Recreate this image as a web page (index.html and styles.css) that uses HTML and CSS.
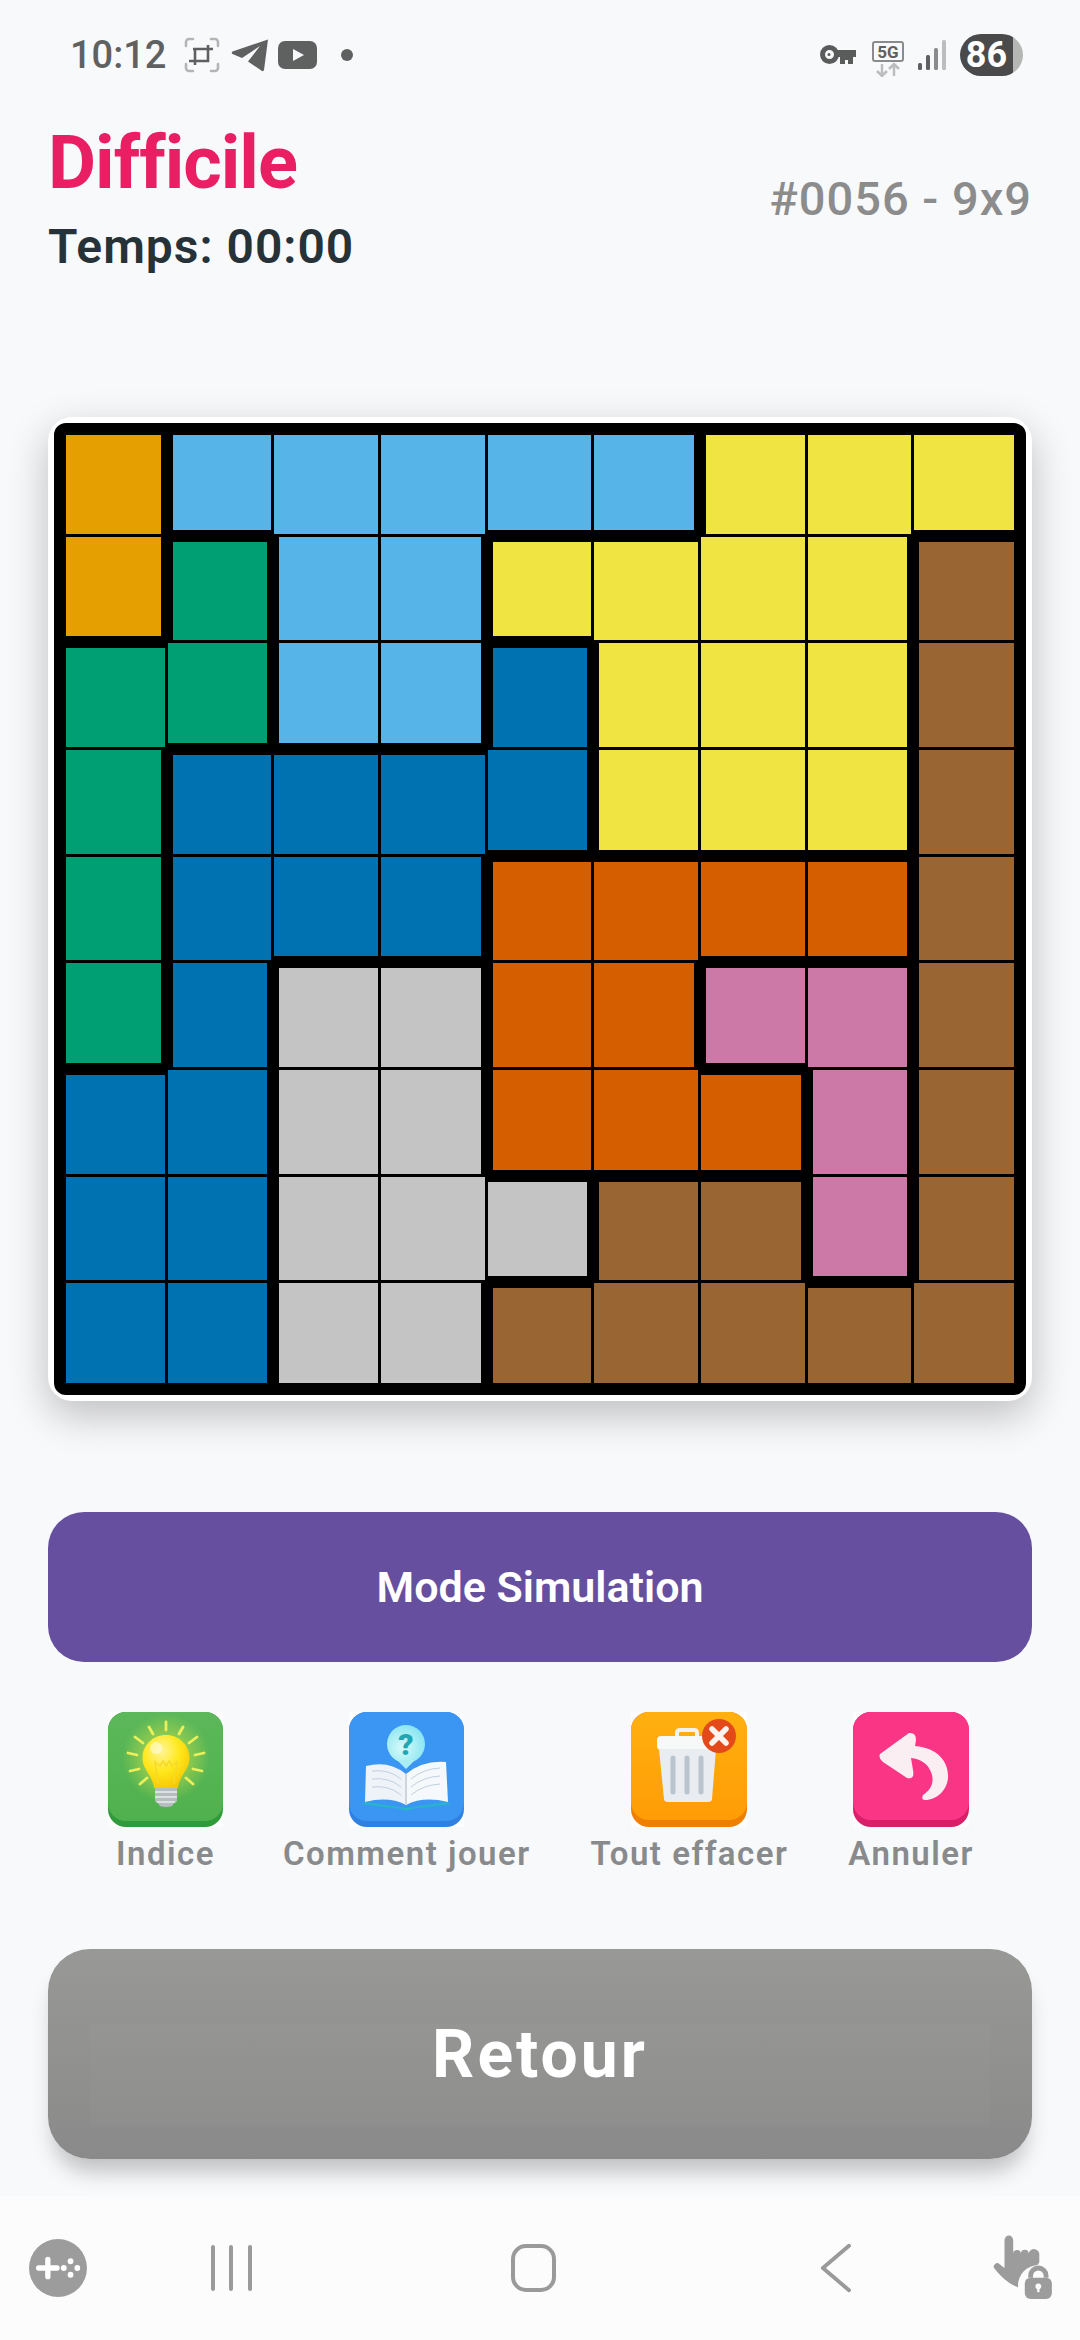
FILE: index.html
```html
<!DOCTYPE html>
<html lang="fr">
<head>
    <meta charset="UTF-8">
    <meta name="viewport" content="width=device-width, initial-scale=1.0">
    <title>Difficile</title>
    <link rel="stylesheet" href="styles.css">
</head>
<body>
    <!-- Barre d'état -->
    <div class="status-bar">
        <div class="status-left">
            <span class="clock">10:12</span>
            <svg class="ic-crop" width="36" height="36" viewBox="0 0 36 36" fill="none">
                <path d="M2 9V5a3 3 0 0 1 3-3h4M27 2h4a3 3 0 0 1 3 3v4M34 27v4a3 3 0 0 1-3 3h-4M9 34H5a3 3 0 0 1-3-3v-4" stroke="#b4b6b6" stroke-width="2.6" stroke-linecap="round"/>
                <path d="M11 28v-4M24 8v4M9 12h20M24 12v12H5M11 12v12" stroke="#5f6161" stroke-width="2.6"/>
            </svg>
            <svg class="ic-telegram" width="38" height="34" viewBox="0 0 38 34"><path d="M37 1.5 L33 32 Q32.500 33.500 31 33 L17 23.500 L29 8 L11 20 L1.500 16 Q0 14.500 1.500 13.500 Z" fill="#5f6161"/></svg>
            <svg class="ic-youtube" width="39" height="28" viewBox="0 0 39 28"><rect width="39" height="28" rx="7" fill="#5f6161"/><path d="M15 8 L26 14 L15 20 Z" fill="#f8f9fb"/></svg>
            <span class="status-dot"></span>
        </div>
        <div class="status-right">
            <svg class="ic-key" width="36" height="20" viewBox="0 0 36 20"><circle cx="9.500" cy="9.500" r="7" fill="none" stroke="#5a5c5c" stroke-width="5"/><circle cx="9" cy="9.500" r="1.500" fill="#5a5c5c"/><path d="M16 5h20v7h-3v7h-5v-4h-3v4h-5v-7h-4z" fill="#5a5c5c"/></svg>
            <svg class="ic-5g" width="32" height="36" viewBox="0 0 32 36">
                <rect x="1" y="1" width="30" height="19" rx="2" fill="none" stroke="#8a8c8c" stroke-width="2"/>
                <text x="16" y="16.500" text-anchor="middle" class="five-g">5G</text>
                <path d="M10 23v12M5 30l5 5 5-5M22 35V23M17 28l5-5 5 5" fill="none" stroke="#bcbebe" stroke-width="2.500"/>
            </svg>
            <svg class="ic-signal" width="28" height="30" viewBox="0 0 28 30">
                <rect x="0" y="23" width="4" height="7" rx="1.500" fill="#5f6161"/>
                <rect x="8" y="15" width="4" height="15" rx="1.500" fill="#5f6161"/>
                <rect x="16" y="8" width="4" height="22" rx="1.500" fill="#8a8c8c"/>
                <rect x="24" y="0" width="4" height="30" rx="1.500" fill="#bcbebe"/>
            </svg>
            <span class="battery"><span class="battery-level">86</span></span>
        </div>
    </div>

    <div class="page">
        <!-- En-tête -->
        <div class="top-row">
            <div>
                <h1 class="level">Difficile</h1>
                <p class="timer">Temps: 00:00</p>
            </div>
            <p class="puzzle-id">#0056 - 9x9</p>
        </div>

        <!-- Grille -->
        <div class="board-card">
            <div class="board">
                <div class="cell amber bt bl br"></div>
                <div class="cell sky bt bl bb"></div>
                <div class="cell sky bt"></div>
                <div class="cell sky bt"></div>
                <div class="cell sky bt bb"></div>
                <div class="cell sky bt bb br"></div>
                <div class="cell yellow bt bl"></div>
                <div class="cell yellow bt"></div>
                <div class="cell yellow bt br bb"></div>

                <div class="cell amber bl br bb"></div>
                <div class="cell green bt bl br"></div>
                <div class="cell sky bl"></div>
                <div class="cell sky br"></div>
                <div class="cell yellow bt bl bb"></div>
                <div class="cell yellow bt"></div>
                <div class="cell yellow"></div>
                <div class="cell yellow br"></div>
                <div class="cell brown bt bl br"></div>

                <div class="cell green bt bl"></div>
                <div class="cell green br bb"></div>
                <div class="cell sky bl bb"></div>
                <div class="cell sky br bb"></div>
                <div class="cell blue bt bl br"></div>
                <div class="cell yellow bl"></div>
                <div class="cell yellow"></div>
                <div class="cell yellow br"></div>
                <div class="cell brown bl br"></div>

                <div class="cell green bl br"></div>
                <div class="cell blue bt bl"></div>
                <div class="cell blue bt"></div>
                <div class="cell blue bt"></div>
                <div class="cell blue br bb"></div>
                <div class="cell yellow bl bb"></div>
                <div class="cell yellow bb"></div>
                <div class="cell yellow br bb"></div>
                <div class="cell brown bl br"></div>

                <div class="cell green bl br"></div>
                <div class="cell blue bl"></div>
                <div class="cell blue bb"></div>
                <div class="cell blue br bb"></div>
                <div class="cell orange bt bl"></div>
                <div class="cell orange bt"></div>
                <div class="cell orange bt bb"></div>
                <div class="cell orange bt br bb"></div>
                <div class="cell brown bl br"></div>

                <div class="cell green bl br bb"></div>
                <div class="cell blue bl br"></div>
                <div class="cell gray bt bl"></div>
                <div class="cell gray bt br"></div>
                <div class="cell orange bl"></div>
                <div class="cell orange br"></div>
                <div class="cell pink bt bl bb"></div>
                <div class="cell pink bt br"></div>
                <div class="cell brown bl br"></div>

                <div class="cell blue bt bl"></div>
                <div class="cell blue br"></div>
                <div class="cell gray bl"></div>
                <div class="cell gray br"></div>
                <div class="cell orange bl bb"></div>
                <div class="cell orange bb"></div>
                <div class="cell orange bt br bb"></div>
                <div class="cell pink bl br"></div>
                <div class="cell brown bl br"></div>

                <div class="cell blue bl"></div>
                <div class="cell blue br"></div>
                <div class="cell gray bl"></div>
                <div class="cell gray"></div>
                <div class="cell gray bt br bb"></div>
                <div class="cell brown bt bl"></div>
                <div class="cell brown bt br"></div>
                <div class="cell pink bl br bb"></div>
                <div class="cell brown bl br"></div>

                <div class="cell blue bl bb"></div>
                <div class="cell blue br bb"></div>
                <div class="cell gray bl bb"></div>
                <div class="cell gray br bb"></div>
                <div class="cell brown bt bl bb"></div>
                <div class="cell brown bb"></div>
                <div class="cell brown bb"></div>
                <div class="cell brown bt bb"></div>
                <div class="cell brown br bb"></div>
            </div>
        </div>

        <button class="btn-mode">Mode Simulation</button>

        <!-- Actions -->
        <div class="actions">
            <div class="action">
                <svg class="action-icon" width="115" height="115" viewBox="0 0 115 115">
                    <defs>
                        <linearGradient id="bulbBg" x1="0" y1="0" x2="0" y2="1"><stop offset="0" stop-color="#5cb85a"/><stop offset="1" stop-color="#4fb14d"/></linearGradient>
                        <radialGradient id="bulbGlass" cx="0.4" cy="0.3" r="0.75"><stop offset="0" stop-color="#fff59a"/><stop offset="0.5" stop-color="#ffe81f"/><stop offset="1" stop-color="#f7c600"/></radialGradient>
                        <radialGradient id="bulbGlow"><stop offset="0.5" stop-color="#c8e04a" stop-opacity="0.5"/><stop offset="1" stop-color="#c8e04a" stop-opacity="0"/></radialGradient>
                    </defs>
                    <rect width="115" height="115" rx="18" fill="#2e9a3a"/>
                    <rect width="115" height="109" rx="18" fill="url(#bulbBg)"/>
                    <circle cx="58" cy="46" r="44" fill="url(#bulbGlow)"/>
                    <path d="M58 10v8M41 15l4 7M75 15l-4 7M27 25l8 6M89 25l-8 6M20 41l9 2M96 41l-9 2M22 59l9-2M94 59l-9-2M32 72l7-6M85 72l-7-6" stroke="#ecef5a" stroke-width="2.800" stroke-linecap="round"/>
                    <path d="M58 23c-13 0-23.500 10-23.500 23 0 12 10 17 11.500 30h24c1.500-13 11.500-18 11.500-30 0-13-10.500-23-23.500-23z" fill="url(#bulbGlass)"/>
                    <path d="M50 72l-3-22 5 4 3-5 3 5 3-5 3 5 5-4-3 22" fill="none" stroke="#f5d92a" stroke-width="1.500"/>
                    <ellipse cx="48" cy="36" rx="6" ry="6" fill="#fff" opacity="0.45"/>
                    <path d="M47 76h22v12q0 3-3 3l-2 3q-6 2-12 0l-2-3q-3 0-3-3z" fill="#b7bdbf"/>
                    <path d="M47 80h22M47 85h22M49 90h18" stroke="#e7ecec" stroke-width="1.600"/>
                </svg>
                <span class="action-label">Indice</span>
            </div>
            <div class="action">
                <svg class="action-icon" width="115" height="115" viewBox="0 0 115 115">
                    <defs>
                        <radialGradient id="bubble" cx="0.4" cy="0.6" r="0.7"><stop offset="0" stop-color="#d8fafc"/><stop offset="1" stop-color="#7fe3ef"/></radialGradient>
                    </defs>
                    <rect width="115" height="115" rx="18" fill="#2f80e0"/>
                    <rect width="115" height="109" rx="18" fill="#3b96f3"/>
                    <circle cx="57" cy="32" r="19" fill="url(#bubble)"/>
                    <path d="M48 48h18l-9 9z" fill="#a9eef5"/>
                    <text x="57" y="43" text-anchor="middle" class="book-mark">?</text>
                    <path d="M12 92 L17 90 L57 96 L97 90 L103 92 L62 97 Q57 100 52 97 Z" fill="#27b5c9"/>
                    <path d="M17 54 Q40 48 57 62 L57 93 Q40 84 16 90 Z" fill="#eef3f7"/>
                    <path d="M97 50 Q74 48 57 62 L57 93 Q74 84 99 90 Z" fill="#f6f9fb"/>
                    <path d="M23 59Q40 57 52 67M23 67Q40 65 52 75M23 75Q40 73 52 83M91 56Q74 57 62 67M91 64Q74 65 62 75M91 72Q74 73 62 83" fill="none" stroke="#c0cfe0" stroke-width="1"/>
                    <path d="M57 62v31" stroke="#cdd6df" stroke-width="2"/>
                </svg>
                <span class="action-label">Comment jouer</span>
            </div>
            <div class="action">
                <svg class="action-icon" width="116" height="115" viewBox="0 0 116 115">
                    <defs>
                        <linearGradient id="trashBg" x1="0" y1="0" x2="0" y2="1"><stop offset="0" stop-color="#ffb010"/><stop offset="1" stop-color="#ff9c06"/></linearGradient>
                    </defs>
                    <rect width="116" height="115" rx="18" fill="#f07f00"/>
                    <rect width="116" height="108" rx="18" fill="url(#trashBg)"/>
                    <path d="M46 25v-4q0-3 3-3h14q3 0 3 3v4" fill="none" stroke="#f2f2ee" stroke-width="4"/>
                    <rect x="26" y="24" width="60" height="14" rx="4" fill="#f7f8f8"/>
                    <path d="M28 37h57l-4 50q0 3-4 3H37q-4 0-4-3z" fill="#e9edf2"/>
                    <path d="M42 46v34M56 46v34M70 46v34" stroke="#b9c4ce" stroke-width="5" stroke-linecap="round"/>
                    <circle cx="88" cy="24" r="17" fill="#e4491a"/>
                    <path d="M81 17l14 14M95 17l-14 14" stroke="#fdf3ee" stroke-width="5.500" stroke-linecap="round"/>
                </svg>
                <span class="action-label">Tout effacer</span>
            </div>
            <div class="action">
                <svg class="action-icon" width="116" height="115" viewBox="0 0 116 115">
                    <rect width="116" height="115" rx="18" fill="#d81f68"/>
                    <rect width="116" height="108" rx="18" fill="#fb3585"/>
                    <path d="M27 42 L56 21 Q63 20 63 28 L62 34 C85 36 96 50 95 66 C94 78 84 88 72 88 Q68 88 70 83 C78 78 82 70 78 60 C75 52 68 47 58 46 L60 58 Q62 68 54 66 L30 50 Q25 46 27 42 Z" fill="#fbeef3"/>
                </svg>
                <span class="action-label">Annuler</span>
            </div>
        </div>

        <button class="btn-back">Retour</button>
    </div>

    <!-- Barre de navigation -->
    <div class="nav-bar">
        <svg class="nav-game" width="60" height="60" viewBox="0 0 60 60">
            <circle cx="30" cy="30" r="30" fill="#9c9c9c"/>
            <path d="M10 30h19M19.500 21v18" stroke="#fff" stroke-width="5.500" stroke-linecap="round"/>
            <circle cx="36" cy="30" r="3" fill="#fff"/><circle cx="43" cy="23" r="3" fill="#fff"/>
            <circle cx="50" cy="30" r="3" fill="#fff"/><circle cx="43" cy="37" r="3" fill="#fff"/>
        </svg>
        <span class="nav-recents"><i></i><i></i><i></i></span>
        <span class="nav-home"></span>
        <svg class="nav-back" width="32" height="50" viewBox="0 0 32 50"><path d="M30 2 L3 25 L30 48" fill="none" stroke="#9a9a9a" stroke-width="4" stroke-linecap="round" stroke-linejoin="round"/></svg>
        <svg class="nav-touch" width="66" height="72" viewBox="28 12 66 72">
            <path d="M43 19a4.500 4.500 0 0 1 9 0V34a4 4 0 0 1 8-1 4 4 0 0 1 8 0 4 4 0 0 1 11 2V42L60 69C50 66 42 60 33 49a3.500 3.500 0 0 1 5-5L43 48Z" fill="#9c9c9c"/>
            <circle cx="78" cy="66" r="21" fill="#fcfcfc"/>
            <path d="M70 58V56a8 8 0 0 1 16 0V58" fill="none" stroke="#9c9c9c" stroke-width="5"/>
            <rect x="64" y="58" width="28" height="22" rx="6" fill="#9c9c9c"/>
            <circle cx="78" cy="67" r="3" fill="#fcfcfc"/><rect x="76.800" y="67" width="2.400" height="6" fill="#fcfcfc"/>
        </svg>
    </div>
</body>
</html>
```

FILE: styles.css
```css
* {
    box-sizing: border-box;
}
body {
    margin: 0;
    width: 1080px;
    height: 2340px;
    overflow: hidden;
    display: flex;
    flex-direction: column;
    background-color: #f8f9fb;
    font-family: Roboto, "Liberation Sans", sans-serif;
}

/* Barre d'état */
.status-bar {
    display: flex;
    justify-content: space-between;
    align-items: center;
    height: 110px;
    padding: 0 57px 0 70px;
}
.status-left, .status-right {
    display: flex;
    align-items: center;
}
.clock {
    font-size: 38px;
    font-weight: 500;
    color: #5f6161;
}
.ic-crop {
    margin-left: 18px;
}
.ic-telegram {
    margin-left: 11px;
}
.ic-youtube {
    margin-left: 9px;
}
.status-dot {
    width: 12px;
    height: 12px;
    margin-left: 24px;
    border-radius: 50%;
    background-color: #5f6161;
}
.ic-5g {
    margin-left: 16px;
    margin-top: 7px;
}
.five-g {
    font-size: 17px;
    font-weight: 700;
    fill: #5f6161;
}
.ic-signal {
    margin-left: 14px;
}
.battery {
    width: 63px;
    height: 42px;
    margin-left: 14px;
    border-radius: 21px;
    background: linear-gradient(90deg, #4a4a4a 84%, #b5b7b5 84%);
    overflow: hidden;
}
.battery-level {
    display: block;
    width: 53px;
    text-align: center;
    font-size: 36px;
    line-height: 42px;
    font-weight: 700;
    color: #fff;
}

/* Contenu */
.page {
    flex: 1;
    padding: 0 48px;
}
.top-row {
    display: flex;
    justify-content: space-between;
    height: 307px;
}
.level {
    margin: 15px 0 0;
    font-size: 74px;
    line-height: 76px;
    font-weight: 700;
    letter-spacing: -1px;
    color: #e91e63;
}
.timer {
    margin: 19px 0 0;
    font-size: 48px;
    line-height: 54px;
    font-weight: 600;
    letter-spacing: 1px;
    color: #263238;
}
.puzzle-id {
    margin: 62px 0 0;
    font-size: 47px;
    line-height: 54px;
    font-weight: 500;
    letter-spacing: 1px;
    color: #8c8c8c;
}

.board-card {
    padding: 6px;
    border-radius: 24px;
    background: #fff;
    box-shadow: 0 14px 40px rgba(0, 0, 0, 0.24);
}
.board {
    display: grid;
    grid-template-columns: repeat(9, 1fr);
    grid-template-rows: repeat(9, 1fr);
    height: 972px;
    border: 6px solid #000;
    border-radius: 12px;
    background-color: #000;
}
.cell {
    border-style: solid;
    border-color: #000;
    border-width: 1px 2px 2px 1px;
}
.bt {
    border-top-width: 6px;
}
.br {
    border-right-width: 6px;
}
.bb {
    border-bottom-width: 6px;
}
.bl {
    border-left-width: 6px;
}
.amber {
    background-color: #e69f00;
}
.sky {
    background-color: #56b4e9;
}
.green {
    background-color: #009e73;
}
.blue {
    background-color: #0072b2;
}
.yellow {
    background-color: #f0e442;
}
.orange {
    background-color: #d55e00;
}
.pink {
    background-color: #cc79a7;
}
.brown {
    background-color: #996633;
}
.gray {
    background-color: #c4c4c4;
}

button {
    display: block;
    width: 100%;
    border: none;
    color: #fff;
    font-family: inherit;
}
.btn-mode {
    height: 150px;
    margin-top: 111px;
    border-radius: 36px;
    background-color: #674f9f;
    font-size: 43px;
    font-weight: 600;
}

.actions {
    display: flex;
    justify-content: space-between;
    margin-top: 50px;
    padding: 0 58px 0 60px;
}
.action {
    display: flex;
    flex-direction: column;
    align-items: center;
}
.action-icon {
    display: block;
    background-color: #fdfdfe;
}
.action-label {
    margin-top: 7px;
    font-size: 33px;
    line-height: 40px;
    font-weight: 600;
    letter-spacing: 1.5px;
    color: #888a8c;
}
.book-mark {
    font-size: 30px;
    font-weight: 900;
    fill: #1fa8b3;
}

.btn-back {
    position: relative;
    height: 210px;
    margin-top: 75px;
    border-radius: 42px;
    background: linear-gradient(180deg, #989896, #8a8a8a);
    box-shadow: 0 18px 22px -6px rgba(0, 0, 0, 0.24);
    font-size: 66px;
    font-weight: 700;
    letter-spacing: 3px;
}
.btn-back::before {
    content: "";
    position: absolute;
    left: 42px;
    right: 42px;
    top: 74px;
    bottom: 34px;
    background-color: rgba(255, 255, 255, 0.02);
}

/* Barre de navigation */
.nav-bar {
    position: relative;
    display: flex;
    align-items: center;
    height: 144px;
    padding: 0 26px 0 29px;
    background-color: #fcfcfc;
}
.nav-recents {
    display: flex;
    justify-content: space-between;
    width: 42px;
    height: 46px;
    margin-left: 124px;
}
.nav-recents i {
    width: 4px;
    border-radius: 2px;
    background-color: #9a9a9a;
}
.nav-home {
    width: 47px;
    height: 48px;
    margin-left: 259px;
    border: 4px solid #9a9a9a;
    border-radius: 15px;
}
.nav-back {
    margin-left: 264px;
}
.nav-touch {
    margin-left: 139px;
}
```
